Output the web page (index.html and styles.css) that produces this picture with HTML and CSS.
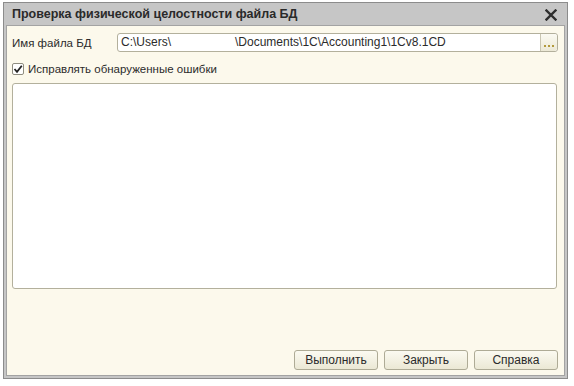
FILE: index.html
```html
<!DOCTYPE html>
<html lang="ru">
  <head>
    <meta charset="UTF-8" />
    <title>Проверка физической целостности файла БД</title>
    <link rel="stylesheet" href="styles.css">
  </head>
  <body>
    <div class="window">
      <div class="title">
        <span>Проверка физической целостности файла БД</span>
        <svg class="close" width="12" height="12" viewBox="0 0 12 12">
          <path d="M1.5 1.5 L10.5 10.5 M10.5 1.5 L1.5 10.5" stroke="#2e2e2e" stroke-width="2.4" stroke-linecap="square" />
        </svg>
      </div>
      <div class="content">
        <div class="row">
          <label class="label">Имя файла БД</label>
          <div class="field">
            <span class="value">C:\Users\<span class="gap"></span>\Documents\1C\Accounting1\1Cv8.1CD</span>
            <span class="pick">
              <svg width="16" height="17" viewBox="0 0 16 17">
                <rect x="3" y="11" width="2" height="2" fill="#b39a3c" />
                <rect x="7" y="11" width="2" height="2" fill="#b39a3c" />
                <rect x="11" y="11" width="2" height="2" fill="#b39a3c" />
              </svg>
            </span>
          </div>
        </div>
        <div class="check-row">
          <span class="checkbox">
            <svg width="10" height="10" viewBox="0 0 10 10">
              <path d="M1.5 5 L4 7.8 L8.8 1.8" fill="none" stroke="#222" stroke-width="1.8" />
            </svg>
          </span>
          <span>Исправлять обнаруженные ошибки</span>
        </div>
        <div class="log"></div>
        <div class="buttons">
          <button class="btn">Выполнить</button>
          <button class="btn">Закрыть</button>
          <button class="btn">Справка</button>
        </div>
      </div>
    </div>
  </body>
</html>
```

FILE: styles.css
```css
body {
  margin: 0;
  background: #fff;
  font-family: "Liberation Sans", Arial, sans-serif;
  font-size: 11.5px;
  color: #2b2b2b;
}
.window {
  box-sizing: border-box;
  width: 565px;
  height: 377px;
  margin: 2px 0 0 3px;
  border: 1px solid #8c8c8c;
  background: #c6c6c6;
  padding: 0 2px 2px 2px;
  display: flex;
  flex-direction: column;
}
.title {
  height: 22px;
  display: flex;
  align-items: center;
  justify-content: space-between;
  padding: 0 8px 0 6px;
  font-size: 12.5px;
  font-weight: bold;
  color: #2a2a2a;
}
.close {
  margin-top: 2px;
}
.content {
  flex: 1;
  display: flex;
  flex-direction: column;
  background: #fcf9ec;
  border: 1px solid #a3a3a3;
  padding: 7px 6px 5px 5px;
}
.row {
  display: flex;
  align-items: center;
  height: 19px;
}
.label {
  width: 105px;
}
.field {
  flex: 1;
  height: 19px;
  box-sizing: border-box;
  display: flex;
  border: 1px solid #b3b09c;
  border-radius: 3px;
  background: #fff;
}
.value {
  flex: 1;
  padding-left: 3px;
  font-size: 12px;
  line-height: 17px;
  white-space: nowrap;
}
.gap {
  display: inline-block;
  width: 64px;
}
.pick {
  width: 16px;
  border-left: 1px solid #c9c6b2;
  border-radius: 0 3px 3px 0;
  background: linear-gradient(#fbfaf2, #ece9d6);
}
.check-row {
  display: flex;
  align-items: center;
  margin-top: 10px;
  height: 13px;
}
.checkbox {
  width: 12px;
  height: 12px;
  box-sizing: border-box;
  border: 1px solid #8f8d80;
  border-radius: 2px;
  background: #fff;
  display: flex;
  align-items: center;
  justify-content: center;
  margin-right: 4px;
}
.log {
  height: 206px;
  box-sizing: border-box;
  margin-top: 8px;
  margin-right: 1px;
  border: 1px solid #b3b09c;
  border-radius: 3px;
  background: #fff;
}
.buttons {
  margin-top: auto;
  display: flex;
  justify-content: flex-end;
  gap: 6px;
}
.btn {
  width: 84px;
  height: 20px;
  padding: 0;
  font-family: inherit;
  font-size: 12px;
  color: #2b2b2b;
  border: 1px solid #aeab96;
  border-radius: 3px;
  background: linear-gradient(#fbfaf1, #ebe8d5);
}
```
